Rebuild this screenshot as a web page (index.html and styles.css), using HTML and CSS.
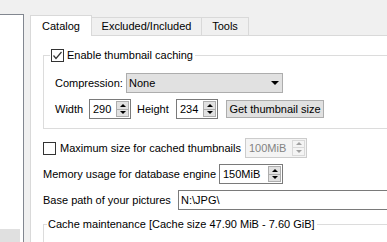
FILE: index.html
```html
<!DOCTYPE html>
<html lang="en">
<head>
  <meta charset="UTF-8" />
  <meta name="viewport" content="width=device-width, initial-scale=1.0"/>
  <title>Catalog settings</title>
  <link rel="stylesheet" href="styles.css">
</head>
<body>
  <div class="window">
    <div class="side-panel">
      <div class="side-item"></div>
    </div>
    <div class="tabs">
      <div class="tab-strip">
        <div class="tab tab-catalog active">Catalog</div>
        <div class="tab tab-excl">Excluded/Included</div>
        <div class="tab tab-tools">Tools</div>
      </div>
      <div class="tab-page">
        <fieldset class="group group-thumbs">
          <legend>
            <label class="check">
              <span class="box">
                <svg width="11" height="11" viewBox="0 0 11 11"><polyline points="1.5,5.5 4,8.5 9.5,2" fill="none" stroke="#333" stroke-width="1.2"/></svg>
              </span>
              Enable thumbnail caching
            </label>
          </legend>
          <div class="row">
            <span class="lbl lbl-comp">Compression:</span>
            <div class="combo">None<span class="combo-arrow"></span></div>
          </div>
          <div class="row row-size">
            <span class="lbl lbl-width">Width</span>
            <div class="spin spin-size">
              <span class="spin-val">290</span>
              <span class="spin-btns"><span class="up"></span><span class="down"></span></span>
            </div>
            <span class="lbl lbl-height">Height</span>
            <div class="spin spin-size">
              <span class="spin-val">234</span>
              <span class="spin-btns"><span class="up"></span><span class="down"></span></span>
            </div>
            <button class="btn">Get thumbnail size</button>
          </div>
        </fieldset>

        <div class="row row-max">
          <label class="check check-max">
            <span class="box"></span>
            Maximum size for cached thumbnails
          </label>
          <div class="spin spin-max disabled">
            <span class="spin-val">100MiB</span>
            <span class="spin-btns"><span class="up"></span><span class="down"></span></span>
          </div>
        </div>
        <div class="row row-mem">
          <span class="lbl lbl-mem">Memory usage for database engine</span>
          <div class="spin spin-mem">
            <span class="spin-val">150MiB</span>
            <span class="spin-btns"><span class="up"></span><span class="down"></span></span>
          </div>
        </div>
        <div class="row row-path">
          <span class="lbl lbl-path">Base path of your pictures</span>
          <div class="edit">N:\JPG\</div>
        </div>

        <fieldset class="group group-cache">
          <legend>Cache maintenance [Cache size 47.90 MiB - 7.60 GiB]</legend>
        </fieldset>
      </div>
    </div>
  </div>
</body>
</html>
```

FILE: styles.css
```css
html, body {
  margin: 0;
  padding: 0;
}
body {
  width: 387px;
  height: 242px;
  overflow: hidden;
  background: #f0f0f0;
  font-family: "Liberation Sans", Arial, sans-serif;
  font-size: 11px;
  color: #000;
}
.window {
  display: flex;
  height: 242px;
}
.side-panel {
  width: 23px;
  margin-top: 14px;
  background: #fff;
  border-top: 1px solid #828790;
  border-right: 1px solid #828790;
  display: flex;
  flex-direction: column;
  justify-content: flex-end;
}
.side-item {
  width: 20px;
  height: 13px;
  background: #e0e0e0;
}
.tabs {
  margin-left: 6px;
  margin-top: 15px;
  flex: 1;
  display: flex;
  flex-direction: column;
  min-width: 0;
}
.tab-strip {
  display: flex;
  align-items: flex-end;
  height: 20px;
  position: relative;
  z-index: 1;
}
.tab {
  box-sizing: border-box;
  height: 18px;
  line-height: 17px;
  text-align: center;
  background: #f0f0f0;
  border: 1px solid #d9d9d9;
  border-bottom: none;
  margin-left: -1px;
}
.tab.active {
  height: 21px;
  margin-bottom: -1px;
  background: #fff;
  margin-left: 0;
  line-height: 21px;
}
.tab-catalog { width: 62px; }
.tab-excl { width: 111px; }
.tab-tools { width: 48px; }
.tab-page {
  flex: 1;
  background: #fff;
  border-top: 1px solid #d9d9d9;
  border-left: 1px solid #d9d9d9;
  padding: 12px 0 0 12px;
  overflow: hidden;
}

.group {
  margin: 0;
  padding: 0 0 0 11px;
  border: 1px solid #dcdcdc;
  width: 400px;
}
.group legend {
  padding: 0 2px 0 1px;
  line-height: 15px;
}
.group-thumbs {
  padding-top: 10px;
  padding-bottom: 9px;
}
.group-thumbs legend {
  margin-left: -5px;
}
.group-cache {
  margin-top: 7px;
  padding-left: 0;
  height: 40px;
}
.group-cache legend {
  margin-left: 3px;
}

.row {
  display: flex;
  align-items: center;
  height: 20px;
  white-space: nowrap;
}
.row-size {
  margin-top: 6px;
}
.lbl { flex-shrink: 0; }
.lbl-comp { width: 71px; }
.lbl-width { width: 34px; }
.lbl-height { width: 39px; margin-left: 6px; }
.lbl-mem { width: 176px; }
.lbl-path { width: 135px; }

.check {
  display: flex;
  align-items: center;
}
.box {
  box-sizing: border-box;
  flex-shrink: 0;
  width: 13px;
  height: 13px;
  border: 1px solid #333;
  background: #fff;
  margin-right: 3px;
  display: flex;
  align-items: center;
  justify-content: center;
}
.check-max {
  width: 202px;
  flex-shrink: 0;
}
.check-max .box {
  margin-right: 4px;
}

.combo {
  box-sizing: border-box;
  width: 157px;
  height: 20px;
  background: #e1e1e1;
  border: 1px solid #adadad;
  padding-left: 2px;
  line-height: 18px;
  display: flex;
  justify-content: space-between;
  align-items: center;
}
.combo-arrow {
  width: 0;
  height: 0;
  border-left: 4px solid transparent;
  border-right: 4px solid transparent;
  border-top: 4px solid #000;
  margin-right: 3px;
}

.spin {
  box-sizing: border-box;
  flex-shrink: 0;
  height: 20px;
  border: 1px solid #7a7a7a;
  background: #fff;
  padding: 1px;
  display: flex;
}
.spin-size { width: 42px; }
.spin-max { width: 62px; margin-top: -1px; }
.spin-mem { width: 64px; }
.spin-val {
  flex: 1;
  padding-left: 2px;
  line-height: 16px;
}
.spin-btns {
  width: 13px;
  display: flex;
  flex-direction: column;
  border: 1px solid #adadad;
  background: #e1e1e1;
  box-sizing: border-box;
}
.spin-btns span {
  flex: 1;
  display: flex;
  align-items: center;
  justify-content: center;
}
.spin-btns .up {
  border-bottom: 1px solid #adadad;
}
.spin-btns .up::before,
.spin-btns .down::before {
  content: "";
  width: 0;
  height: 0;
  border-left: 3px solid transparent;
  border-right: 3px solid transparent;
}
.spin-btns .up::before { border-bottom: 3px solid #000; }
.spin-btns .down::before { border-top: 3px solid #000; }

.spin.disabled {
  border-color: #cccccc;
  background: #f4f4f4;
  color: #838383;
}
.spin.disabled .spin-btns {
  border-color: #d9d9d9;
  background: #f4f4f4;
}
.spin.disabled .up { border-bottom-color: #d9d9d9; }
.spin.disabled .up::before { border-bottom-color: #a0a0a0; }
.spin.disabled .down::before { border-top-color: #a0a0a0; }

.btn {
  box-sizing: border-box;
  margin-left: 8px;
  width: 98px;
  height: 18px;
  padding: 0;
  font: inherit;
  color: #000;
  background: #e1e1e1;
  border: 1px solid #adadad;
  line-height: 16px;
}

.row-max { margin-top: 9px; }
.row-mem { margin-top: 6px; }
.row-path { margin-top: 6px; }
.edit {
  box-sizing: border-box;
  flex: 1;
  height: 20px;
  border-top: 1px solid #7a7a7a;
  border-bottom: 1px solid #7a7a7a;
  border-left: 1px solid #7a7a7a;
  padding-left: 2px;
  line-height: 18px;
  margin-right: -40px;
}
```
